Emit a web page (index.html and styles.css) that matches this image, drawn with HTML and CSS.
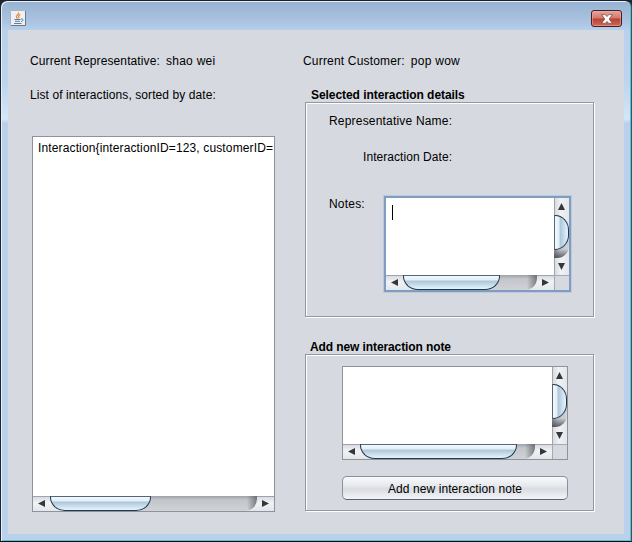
FILE: index.html
```html
<!DOCTYPE html>
<html lang="en">
<head>
<meta charset="utf-8">
<title>Interactions</title>
<link rel="stylesheet" href="styles.css">
</head>
<body>
<div class="window">
  <header class="titlebar">
    <svg class="java" width="16" height="16" viewBox="0 0 16 16">
      <rect x=".5" y=".5" width="15" height="15" rx="1" fill="#eef1f3" stroke="#a9b5c0"/>
      <path d="M15.500 1V15.500H1" fill="none" stroke="#68798a"/>
      <path d="M8.500 2.500C9.500 4.500 5.500 5 6.500 7.500L7.500 8.500M10.500 4.500C8 5.500 8.500 6.500 9 7.500L8.500 8.500" fill="none" stroke="#e08a3c" stroke-width="1.200"/>
      <path d="M4.500 9.500H10.500M5 11.300H10M4 13.500H11.500M11 9C14 8.500 13.500 11 11 11.500" fill="none" stroke="#5b7f9c"/>
    </svg>
    <button class="close" aria-label="Close">
      <svg width="12" height="10" viewBox="0 0 12 10">
        <path d="M.6 .6H4.200L6 2.600L7.800 .6H11.400L8.200 5L11.400 9.400H7.800L6 7.400L4.200 9.400H.6L3.800 5Z" fill="#fff" stroke="#6b4448" stroke-width=".7"/>
      </svg>
    </button>
  </header>
  <main class="content">
    <section class="left">
      <div class="row"><span>Current Representative:</span><span class="value">shao wei</span></div>
      <div class="caption">List of interactions, sorted by date:</div>
      <div class="list">
        <div class="items"><div class="item">Interaction{interactionID=123, customerID=</div></div>
        <div class="hbar">
          <svg class="arrow" viewBox="0 0 17 15"><path d="M5 7.500L12 4V11Z"/></svg>
          <div class="track"><div class="thumb thumb-list"></div></div>
          <svg class="arrow" viewBox="0 0 17 15"><path d="M12 7.500L5 4V11Z"/></svg>
        </div>
      </div>
    </section>
    <section class="right">
      <div class="row customer"><span>Current Customer:</span><span class="value">pop wow</span></div>
      <h2 class="title">Selected interaction details</h2>
      <div class="group details">
        <div class="field">Representative Name:</div>
        <div class="field date">Interaction Date:</div>
        <div class="notes">
          <span class="notes-label">Notes:</span>
          <div class="scroll focused">
            <div class="text"><i class="caret"></i></div>
            <div class="vbar">
              <svg class="varrow" viewBox="0 0 15 17"><path d="M7.500 5L11 12H4Z"/></svg>
              <div class="vtrack"><div class="vthumb"></div></div>
              <svg class="varrow" viewBox="0 0 15 17"><path d="M7.500 12L11 5H4Z"/></svg>
            </div>
            <div class="hbar">
              <svg class="arrow" viewBox="0 0 17 15"><path d="M5 7.500L12 4V11Z"/></svg>
              <div class="track"><div class="thumb thumb-notes"></div></div>
              <svg class="arrow" viewBox="0 0 17 15"><path d="M12 7.500L5 4V11Z"/></svg>
            </div>
            <div class="corner"></div>
          </div>
        </div>
      </div>
      <h2 class="title second">Add new interaction note</h2>
      <div class="group add">
        <div class="scroll">
          <div class="text"></div>
          <div class="vbar">
            <svg class="varrow" viewBox="0 0 15 17"><path d="M7.500 5L11 12H4Z"/></svg>
            <div class="vtrack"><div class="vthumb"></div></div>
            <svg class="varrow" viewBox="0 0 15 17"><path d="M7.500 12L11 5H4Z"/></svg>
          </div>
          <div class="hbar">
            <svg class="arrow" viewBox="0 0 17 15"><path d="M5 7.500L12 4V11Z"/></svg>
            <div class="track"><div class="thumb thumb-add"></div></div>
            <svg class="arrow" viewBox="0 0 17 15"><path d="M12 7.500L5 4V11Z"/></svg>
          </div>
          <div class="corner"></div>
        </div>
        <button class="submit">Add new interaction note</button>
      </div>
    </section>
  </main>
</div>
</body>
</html>
```
FILE: styles.css
```css
* { box-sizing: border-box; }
body {
  margin: 0;
  background: linear-gradient(#20242e 0 90px, #000 110px);
  font: 12px/14px "Liberation Sans", Arial, sans-serif;
  color: #000;
  overflow: hidden;
}
.window {
  width: 632px;
  height: 542px;
  padding: 0 7px 7px;
  border: 1px solid #3a4250;
  border-color: #1c2130 #1f5f68 #05141c #20262e;
  border-radius: 7px 7px 0 0;
  background: linear-gradient(#98b3d2, #a9c3e0 20px, #b9d1ea 30px, #bcd4ee 80px, #d4e6f8 118px, #b9d1ea 122px, #b9d1ea);
  box-shadow: inset 1px 1px #e6f0fa, inset -1px -1px #62bdd4;
}
.titlebar {
  height: 29px;
  padding: 9px 2px 0 2px;
  display: flex;
  justify-content: space-between;
}
.java { display: block; }
.close {
  width: 31px;
  height: 17px;
  padding: 0;
  display: flex;
  align-items: center;
  justify-content: center;
  border: 1px solid #471c24;
  border-radius: 3px;
  background: linear-gradient(#e4a49b, #d3786c 48%, #b9402f 52%, #cf6a58);
  box-shadow: inset 0 0 0 1px #eab5ab80;
}
.content {
  height: 504px;
  display: flex;
  background: #d6d9df;
}
.left { width: 295px; padding: 24px 0 0 22px; }
.right { padding-top: 24px; }
.row { display: flex; gap: 6px; height: 34px; letter-spacing: .11px; }
.customer { letter-spacing: .18px; }
.value { letter-spacing: .27px; }
.caption { height: 48px; letter-spacing: .085px; }
.list {
  width: 243px;
  height: 376px;
  margin-left: 2px;
  border: 1px solid #8d929c;
  display: flex;
  flex-direction: column;
}
.items {
  flex: 1;
  padding: 4px 0 0 5px;
  background: #fff;
  overflow: hidden;
  white-space: nowrap;
  letter-spacing: .135px;
}
.title { margin: 0 0 0 8px; font-size: 12px; line-height: 14px; font-weight: bold; letter-spacing: -.06px; }
.second { margin: 23px 0 0 7px; letter-spacing: -.1px; }
.group {
  width: 289px;
  margin-left: 2px;
  border: 1px solid #9297a1;
  box-shadow: 1px 1px #fff, inset 1px 1px #fff;
}
.details { height: 215px; padding: 11px 0 0 23px; }
.field { height: 36px; letter-spacing: .19px; }
.date { height: 45px; padding-left: 34px; letter-spacing: .06px; }
.notes { display: flex; gap: 19px; }
.notes-label { width: 36px; padding-top: 2px; letter-spacing: .2px; }
.add { height: 157px; padding: 11px 0 0 36px; }
.scroll {
  width: 226px;
  height: 94px;
  border: 1px solid #8d929c;
  display: grid;
  grid-template: 77px 15px / 1fr 15px;
}
.focused {
  width: 187px;
  height: 96px;
  margin-top: 1px;
  border: 2px solid #7f9dc0;
  box-shadow: 0 0 0 1px #bccadb;
}
.text { background: #fff; padding: 7px 0 0 6px; }
.caret { display: block; width: 1px; height: 15px; background: #000; }
.corner { background: #d6d9df; border: solid #a5abb6; border-width: 1px 0 0 1px; }
.hbar {
  height: 15px;
  display: flex;
  background: linear-gradient(#d4d7dc, #f1f2f4 45%, #e4e6e9);
  box-shadow: inset 0 1px #9ea4ae;
}
.arrow { width: 17px; height: 15px; fill: #33373d; flex: none; }
.varrow { display: block; width: 15px; height: 17px; fill: #33373d; flex: none; }
.track {
  flex: 1;
  border-radius: 0 0 12px 14px;
  background: linear-gradient(90deg, transparent calc(100% - 10px), #4e5258aa), linear-gradient(#9da1a7, #c2c5ca 25%, #d0d2d7);
}
.thumb {
  height: 15px;
  border: 1px solid #24394d;
  border-width: 1px 1.500px 1px;
  border-top-color: #50677c;
  border-radius: 0 0 15px 15px / 0 0 14px 14px;
  background: linear-gradient(#f4f9fc 0, #e2edf5 32%, #abc5d8 38%, #c5dae8 65%, #e4f5ff);
}
.thumb-list { width: 101px; }
.thumb-notes { width: 97px; }
.thumb-add { width: 157px; }
.vbar {
  display: flex;
  flex-direction: column;
  background: linear-gradient(90deg, #d4d7dc, #f1f2f4 45%, #e4e6e9);
  box-shadow: inset 1px 0 #9ea4ae;
}
.vtrack {
  flex: 1;
  border-radius: 0 14px 12px 0;
  background: linear-gradient(transparent calc(100% - 9px), #3f4349cc), linear-gradient(90deg, #878b91, #c2c5ca 40%, #d0d2d7);
}
.vthumb {
  width: 15px;
  height: 35px;
  border: 1px solid #24394d;
  border-width: 1.500px 1px;
  border-left-color: #50677c;
  border-radius: 0 14px 14px 0 / 0 15px 15px 0;
  background: linear-gradient(90deg, #f4f9fc 0, #e2edf5 32%, #abc5d8 38%, #c5dae8 65%, #e4f5ff);
}
.submit {
  display: block;
  width: 226px;
  height: 24px;
  margin-top: 16px;
  padding: 1px 0 0;
  border: 1px solid #8b909a;
  border-bottom-color: #5c616b;
  border-radius: 5px;
  background: linear-gradient(#fafafc, #e6e8ec 40%, #d9dce2 55%, #f2f4f8);
  font: inherit;
  letter-spacing: .09px;
  color: #000;
}
```
